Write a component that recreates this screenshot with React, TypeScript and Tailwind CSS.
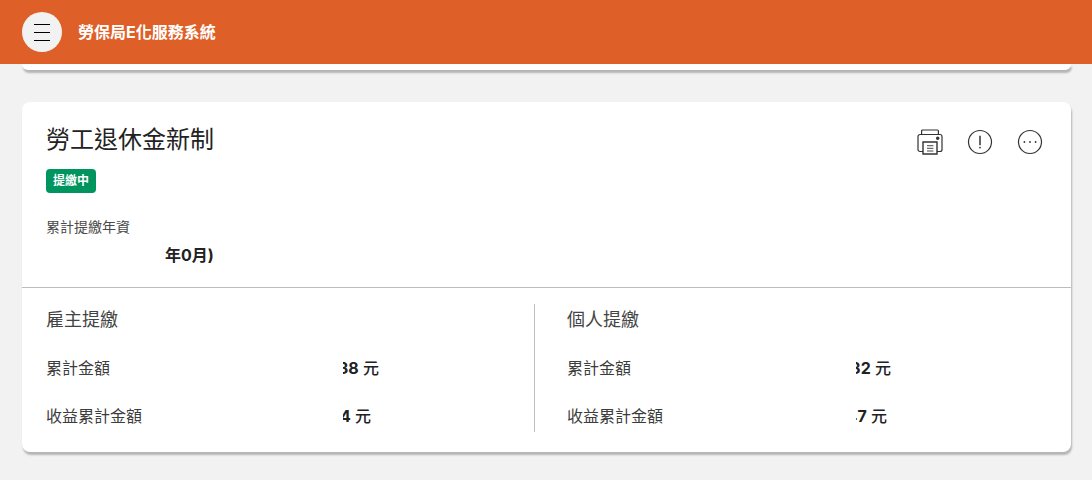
import React from "react";

function Row({ label, num, clip, mb, lw }: { label: string; num: string; clip: string; lw: string; mb?: string }) {
  return (
    <div className={`flex items-center h-6 ${mb ?? ""}`}>
      <span className={`shrink-0 text-base text-[#3c3c3c] ${lw}`}>{label}</span>
      <span className={`flex justify-end overflow-hidden whitespace-nowrap text-base text-[#222] ${clip}`}>
        <span className="shrink-0 font-medium"><b className="font-bold">{num}</b> 元</span>
      </span>
    </div>
  );
}

function Printer() {
  return (
    <svg width="26" height="26" viewBox="0 0 26 26" fill="none" stroke="#333" strokeWidth="1.2">
      <path d="M4.6 5.5V2a1 1 0 0 1 1-1h14.8a1 1 0 0 1 1 1v3.5" />
      <path d="M6 22.5H3a2 2 0 0 1-2-2V7.5a2 2 0 0 1 2-2h20a2 2 0 0 1 2 2v13a2 2 0 0 1-2 2h-3" />
      <path d="M6 13h14v12H6z" strokeWidth="1.4" fill="#fff" />
      <path d="M10 16.7h6.4M10 19.3h6.4M10 22h6.4" strokeWidth="0.9" />
      <circle cx="20.7" cy="9.3" r="1.7" fill="#333" stroke="none" />
    </svg>
  );
}

function Alert() {
  return (
    <svg width="26" height="26" viewBox="0 0 26 26" fill="none" stroke="#333" strokeWidth="1.2">
      <circle cx="13" cy="13" r="11.5" />
      <path d="M13 6.7v9.6" strokeWidth="1.5" />
      <circle cx="13" cy="18.6" r="0.9" fill="#333" stroke="none" />
    </svg>
  );
}

function More() {
  return (
    <svg width="26" height="26" viewBox="0 0 26 26" fill="none" stroke="#333" strokeWidth="1.2">
      <circle cx="13" cy="13" r="11.5" />
      <circle cx="7.4" cy="13" r="0.9" fill="#333" stroke="none" />
      <circle cx="13" cy="13" r="0.9" fill="#333" stroke="none" />
      <circle cx="18.6" cy="13" r="0.9" fill="#333" stroke="none" />
    </svg>
  );
}

export default function App() {
  return (
    <div className="h-[480px] overflow-hidden bg-[#f2f2f2] font-['Inter','Noto_Sans_CJK_TC',sans-serif]">
      <header className="h-16 bg-[#de6028] flex items-center pl-[22px]">
        <button className="w-10 h-10 rounded-full bg-[#f2f2f2] flex flex-col items-center justify-center gap-[7px]">
          <span className="block w-4 h-px bg-black" />
          <span className="block w-4 h-px bg-black" />
          <span className="block w-4 h-px bg-black" />
        </button>
        <h1 className="ml-4 text-base font-bold text-white">勞保局E化服務系統</h1>
      </header>
      <div className="mx-[22px] w-[1049px] h-[6px] bg-white rounded-b-lg shadow-[1px_3px_2px_#b5b5b5]" />
      <section className="mx-[22px] mt-8 w-[1049px] h-[350px] bg-white rounded-lg shadow-[1px_3px_2px_#b5b5b5]">
        <div className="h-[186px] px-6 pt-[22px] border-b border-[#bdbdbd]">
          <div className="flex justify-between">
            <h2 className="text-2xl leading-8 text-[#222]">勞工退休金新制</h2>
            <div className="flex items-center gap-6 pr-1 pt-[3px] h-8">
              <Printer />
              <Alert />
              <More />
            </div>
          </div>
          <div className="mt-[13px] w-[50px] h-6 rounded bg-[#00945e] text-white text-xs font-bold flex items-center justify-center">提繳中</div>
          <div className="mt-6 text-sm leading-5 text-[#4a4a4a]">累計提繳年資</div>
          <div className="mt-[6px] pl-[119px] text-base leading-6 font-bold text-[#222]">年0月)</div>
        </div>
        <div className="flex pt-4">
          <div className="w-[513px] h-32 pl-6 border-r border-[#bdbdbd]">
            <div className="text-lg leading-8 text-[#444] mb-5">雇主提繳</div>
            <Row label="累計金額" num="38" lw="w-[297px]" clip="w-[36px]" mb="mb-6" />
            <Row label="收益累計金額" num="14" lw="w-[297px]" clip="w-[28px]" />
          </div>
          <div className="pl-8">
            <div className="text-lg leading-8 text-[#444] mb-5">個人提繳</div>
            <Row label="累計金額" num="32" lw="w-[289px]" clip="w-[35px]" mb="mb-6" />
            <Row label="收益累計金額" num="47" lw="w-[289px]" clip="w-[31px]" />
          </div>
        </div>
      </section>
    </div>
  );
}
